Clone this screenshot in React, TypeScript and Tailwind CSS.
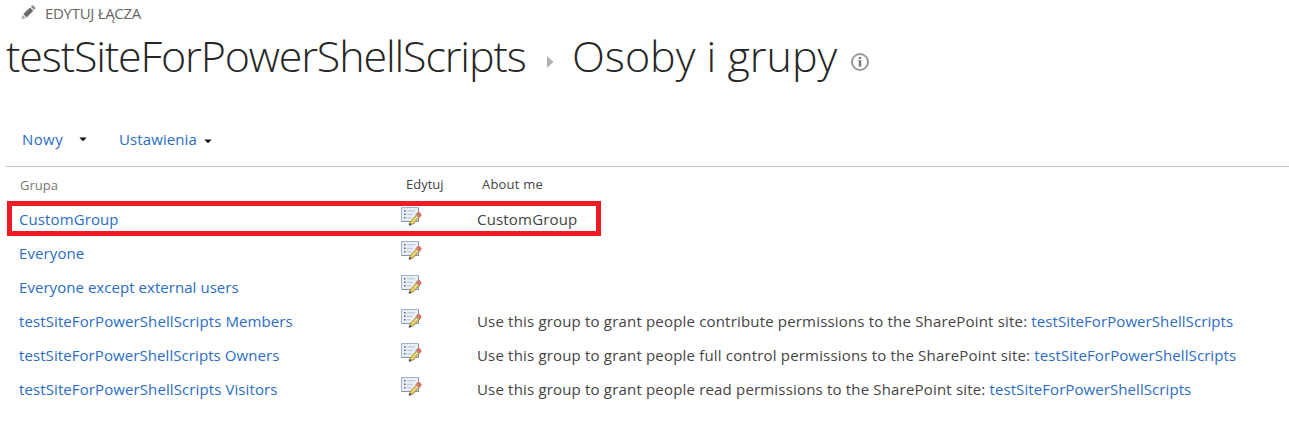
const ROWS = [
  { name: "CustomGroup", about: "CustomGroup", site: "", spacing: "tracking-[0.1px]", highlighted: true },
  { name: "Everyone", about: "", site: "", spacing: "tracking-[0.1px]", highlighted: false },
  { name: "Everyone except external users", about: "", site: "", spacing: "tracking-[0.05px]", highlighted: false },
  { name: "testSiteForPowerShellScripts Members", about: "Use this group to grant people contribute permissions to the SharePoint site: ", site: "testSiteForPowerShellScripts", spacing: "tracking-[0.1px]", highlighted: false },
  { name: "testSiteForPowerShellScripts Owners", about: "Use this group to grant people full control permissions to the SharePoint site: ", site: "testSiteForPowerShellScripts", spacing: "tracking-[0.08px]", highlighted: false },
  { name: "testSiteForPowerShellScripts Visitors", about: "Use this group to grant people read permissions to the SharePoint site: ", site: "testSiteForPowerShellScripts", spacing: "tracking-[0.1px]", highlighted: false },
];

function PencilIcon() {
  return (
    <svg width="15" height="15" viewBox="0 0 15 15" className="block">
      <path d="M0.3 14.3 1.6 9.9 4.9 13.1z" fill="#aaa" />
      <path d="M2.3 9.1 9 2.4 12.3 5.7 5.6 12.4z" fill="#6b6b6b" />
      <path d="M9.8 1.6 10.9.6Q11.6 0 12.3.6L14.1 2.4Q14.7 3.1 14.1 3.8L13.1 4.9z" fill="#8a8a8a" />
    </svg>
  );
}

function EditIcon() {
  return (
    <svg width="21" height="20" viewBox="0 0 21 20" className="block">
      <path d="M.5.5h17v14H.5z" fill="#eaf0f8" stroke="#a3b0c2" />
      <path d="M1 14.5h16.5V1" fill="none" stroke="#8491a5" />
      <path d="M3 3h1.5v1.5H3zM3 6.5h1.5V8H3zM3 10h1.5v1.5H3z" fill="#48658f" />
      <path d="M6 3.8h8M6 7.3h6M6 10.8h4" stroke="#b4c1d3" />
      <path d="M8.3 17.8 9.5 14.2 16 7.3 18.9 9.9 12.2 17z" fill="#d8bf50" stroke="#92804e" strokeWidth=".7" />
      <path d="M11 15.3 17.2 8.6" stroke="#f3e28c" strokeWidth="1.2" />
      <path d="M14.8 7.6 16.7 5.4Q17.6 4.6 19 5.8 20.8 7.4 20 8.7L18.2 10.7z" fill="#d87868" stroke="#b36d5f" strokeWidth=".6" />
      <path d="M14.7 8 17.9 10.8" stroke="#b7bbb8" strokeWidth="1" />
      <path d="M7.7 18.8 8.4 15.8 10.8 18z" fill="#4b4a46" />
    </svg>
  );
}

function Caret() {
  return (
    <svg width="8" height="5" viewBox="0 0 8 5" className="block">
      <path d="M.3.5h7.4L4 4.3z" fill="#111" />
    </svg>
  );
}

export default function App() {
  return (
    <main className="h-[435px] w-full overflow-hidden bg-white font-['Open_Sans',sans-serif] text-[15px] text-[#444]">
      <div className="flex h-7 items-start pl-[21px] pt-[5px]">
        <PencilIcon />
        <a className="-mt-px ml-[9px] text-[15px] leading-[18px] tracking-[-0.3px] text-[#666]">EDYTUJ ŁĄCZA</a>
      </div>
      <h1 className="flex h-[60px] items-center whitespace-nowrap pl-[6px] text-[43px] font-light leading-[60px] text-[#262626]">
        <span className="-mt-[4px] w-[541px] tracking-[-1.13px]">testSiteForPowerShellScripts</span>
        <svg width="7" height="12" viewBox="0 0 7 12" className="mt-[7px] block shrink-0">
          <path d="M0 0 6.5 6 0 12z" fill="#b1b1b1" />
        </svg>
        <span className="-mt-[4px] ml-[18px] w-[279px]">Osoby i grupy</span>
        <svg width="18" height="18" viewBox="0 0 18 18" className="mt-[8px] block shrink-0">
          <circle cx="9" cy="9" r="8" fill="none" stroke="#999" strokeWidth="2" />
          <path d="M7.8 4h2.4v2H7.8zM7.2 7.2h3v6.6H7.8V8.2h-.6z" fill="#777" />
        </svg>
      </h1>
      <nav className="flex h-[78px] items-center pl-[22px] pt-[25px] text-[#2a6dc4]">
        <a className="w-[57px] tracking-[0.4px]">Nowy</a>
        <Caret />
        <a className="ml-[32px] w-[85px] tracking-[0.1px]">Ustawienia</a>
        <span className="mt-[3px]"><Caret /></span>
      </nav>
      <section className="ml-[6px] border-t border-[#c2c2c2]">
        <div className="grid h-[34px] grid-cols-[386px_76px_1fr] items-center pl-[14px] pt-[2px] text-[13px]">
          <span className="pt-[2px] text-[#777]">Grupa</span>
          <span>Edytuj</span>
          <span className="tracking-[0.2px]">About me</span>
        </div>
        {ROWS.map((row) => (
          <div key={row.name} className="relative grid h-[34px] grid-cols-[382px_76px_1fr] items-center whitespace-pre pl-[13px]">
            {row.highlighted && <div className="absolute left-[1px] top-0 h-[35px] w-[594px] border-[5px] border-[#ed1c24]" />}
            <a className={`pt-[2px] text-[#2a6dc4] ${row.spacing}`}>{row.name}</a>
            <span className="-mt-[2px]"><EditIcon /></span>
            <span className="pt-[2px] tracking-[0.18px]">
              {row.about}<a className="tracking-[0.08px] text-[#2a6dc4]">{row.site}</a>
            </span>
          </div>
        ))}
      </section>
    </main>
  );
}
